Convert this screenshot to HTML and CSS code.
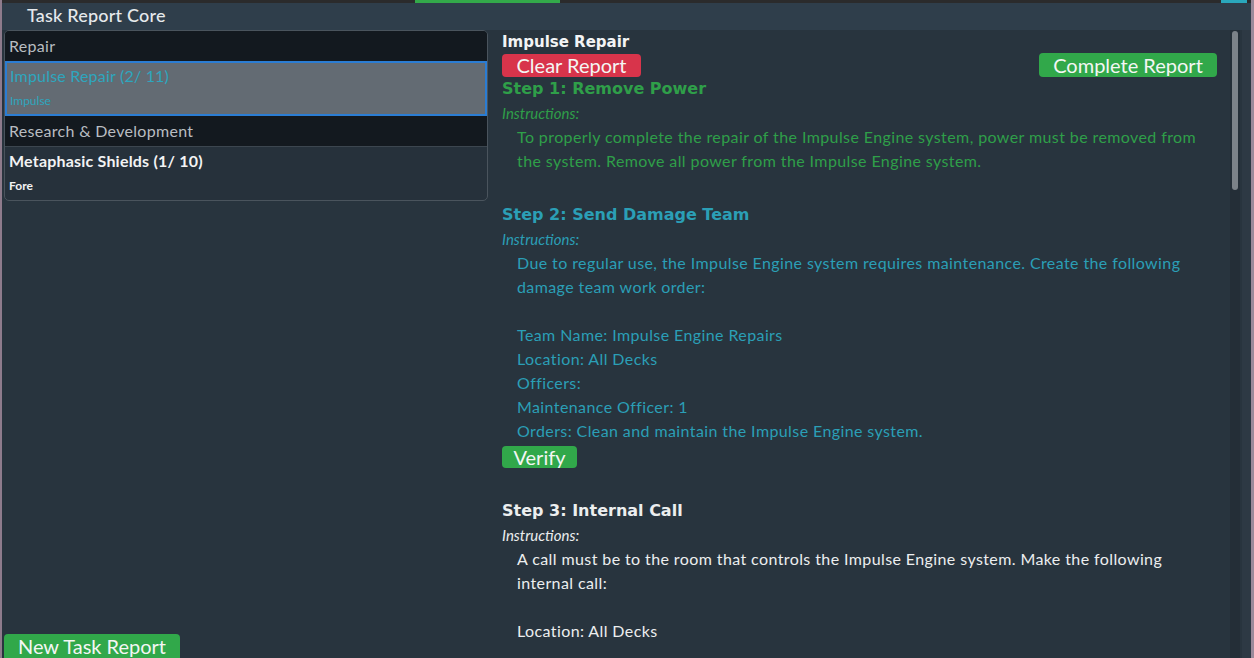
FILE: index.html
```html
<!DOCTYPE html>
<html>
<head>
<meta charset="utf-8">
<link rel="stylesheet" href="styles.css">
</head>
<body>
<div class="topstrip">
  <span class="seg seg-green"></span>
  <span class="seg seg-teal"></span>
</div>
<div class="window">
  <div class="titlebar">Task Report Core</div>
  <div class="main">
    <div class="left">
      <div class="list">
        <div class="group">Repair</div>
        <div class="item selected">
          <div class="item-title">Impulse Repair (2/ 11)</div>
          <div class="item-sub">Impulse</div>
        </div>
        <div class="group">Research &amp; Development</div>
        <div class="item">
          <div class="item-title">Metaphasic Shields (1/ 10)</div>
          <div class="item-sub">Fore</div>
        </div>
      </div>
      <div class="spacer"></div>
      <button class="btn btn-green btn-new">New Task Report</button>
    </div>
    <div class="right">
      <div class="report">
        <div class="report-title">Impulse Repair</div>
        <div class="actions">
          <button class="btn btn-red">Clear Report</button>
          <button class="btn btn-green">Complete Report</button>
        </div>
        <div class="step step-green">
          <div class="step-title">Step 1: Remove Power</div>
          <div class="instr">Instructions:</div>
          <div class="step-body">To properly complete the repair of the Impulse Engine system, power must be removed from the system. Remove all power from the Impulse Engine system.</div>
        </div>
        <div class="step step-teal">
          <div class="step-title">Step 2: Send Damage Team</div>
          <div class="instr">Instructions:</div>
          <div class="step-body">Due to regular use, the Impulse Engine system requires maintenance. Create the following damage team work order:<br><br>Team Name: Impulse Engine Repairs<br>Location: All Decks<br>Officers:<br>Maintenance Officer: 1<br>Orders: Clean and maintain the Impulse Engine system.</div>
          <button class="btn btn-green btn-verify">Verify</button>
        </div>
        <div class="step step-white">
          <div class="step-title">Step 3: Internal Call</div>
          <div class="instr">Instructions:</div>
          <div class="step-body">A call must be to the room that controls the Impulse Engine system. Make the following internal call:<br><br>Location: All Decks</div>
        </div>
      </div>
      <div class="scrollbar"><div class="thumb"></div></div>
    </div>
    <div class="edge"></div>
  </div>
</div>
</body>
</html>
```
FILE: styles.css
```css
* { box-sizing: border-box; }
html, body { margin: 0; padding: 0; height: 100%; overflow: hidden; }
body {
  background: #28343e;
  font-family: "Lato", "Open Sans", sans-serif;
  color: #e8eaec;
  border-left: 2px solid #8e7b8c;
  border-right: 3px solid #9b8a9b;
}
.topstrip {
  height: 3px;
  background: #2b2b2c;
  display: flex;
}
.seg { display: block; height: 3px; }
.seg-green { background: #33a94a; width: 145px; margin-left: 413px; }
.seg-teal { background: #2aa7bc; width: 26px; margin-left: 661px; }
.window { height: 655px; display: flex; flex-direction: column; }
.titlebar {
  height: 27px;
  background: #2f3e4b;
  padding-left: 25px;
  font-size: 18px;
  line-height: 25px;
  color: #e6e9ec;
  font-weight: 500;
  letter-spacing: 0.2px;
}
.main { flex: 1; display: flex; min-height: 0; }
.left {
  width: 486px;
  padding-left: 2px;
  display: flex;
  flex-direction: column;
}
.list {
  border: 1px solid #4a545d;
  border-radius: 5px;
  overflow: hidden;
  background: #26313b;
}
.group {
  height: 30px;
  background: #13191f;
  color: #b9bdc1;
  font-size: 16px;
  line-height: 30px;
  padding-left: 4px;
  letter-spacing: 0.3px;
}
.item {
  height: 54px;
  padding: 1px 4px 0;
  color: #f2f3f4;
  border-top: 1px solid #3c464f;
}
.item.selected {
  background: #636b73;
  border: 2px solid #2b7dd3;
  padding: 0 3px 0;
  height: 55px;
  color: #2ea6be;
}
.item-title { font-size: 16px; line-height: 26px; font-weight: 700; letter-spacing: 0.2px; }
.item.selected .item-title { font-weight: 400; }
.item-sub { font-size: 12px; line-height: 24px; font-weight: 700; }
.item.selected .item-sub { font-weight: 400; }
.spacer { flex: 1; }
.btn {
  font-family: "Lato", "Open Sans", sans-serif;
  border: none;
  border-radius: 4px;
  color: #f4f6f4;
  font-size: 20px;
  line-height: 23px;
  height: 23px;
  padding: 0 13px;
  cursor: pointer;
}
.btn-green { background: #31a84a; }
.btn-red { background: #d8344b; width: 139px; padding: 0; }
.btn-new { align-self: flex-start; width: 176px; height: 24px; padding: 0; border-radius: 4px 4px 0 0; }
.right {
  flex: 1;
  display: flex;
  padding-left: 14px;
  min-width: 0;
}
.report { flex: 1; min-width: 0; padding-top: 2px; padding-right: 13px; overflow: hidden; }
.report-title { font-family: "DejaVu Sans", sans-serif; font-size: 15px; font-weight: 700; line-height: 20px; color: #f3f4f5; }
.actions { display: flex; justify-content: space-between; margin-top: 2px; }
.actions .btn-red { height: 23px; }
.actions .btn-green { height: 24px; width: 178px; padding: 0; margin-top: -1px; }
.step { margin-bottom: 30px; }
.step-title { font-family: "DejaVu Sans", sans-serif; font-size: 16px; font-weight: 700; line-height: 24px; }
.instr { font-style: italic; font-size: 15px; line-height: 24px; }
.step-body { font-size: 16px; letter-spacing: 0.4px; line-height: 24px; padding-left: 15px; padding-right: 3px; }
.step-green { color: #2f9f49; }
.step-teal { color: #2b9fb6; }
.step-white { color: #eceeef; }
.btn-verify { margin-top: 3px; height: 22px; line-height: 22px; width: 75px; padding: 0; }
.step-teal { margin-bottom: 31px; }
.scrollbar {
  width: 10px;
  background: #242e37;
  margin-right: 2px;
  padding: 1px 2px;
}
.thumb {
  height: 159px;
  background: #7c8288;
  border-radius: 3px;
}
.edge { width: 9px; background: #2d3944; }
```
